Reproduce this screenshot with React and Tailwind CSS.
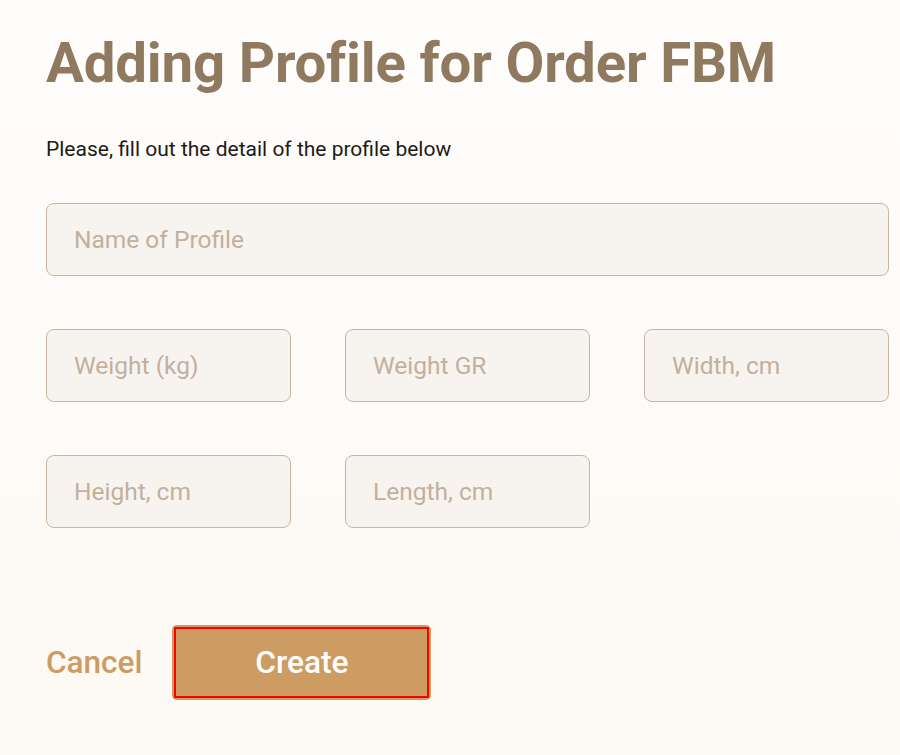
import React from "react";

function Field({ placeholder, className = "" }) {
  return (
    <input
      placeholder={placeholder}
      className={`h-[73px] rounded-[8px] border border-[#c6b6a3] bg-[#f7f4ef] px-[27px] text-[24.5px] text-[#8f7a60] placeholder:text-[#c2b09e] outline-none ${className}`}
      style={{ fontFamily: "Roboto, sans-serif" }}
    />
  );
}

export default function App() {
  return (
    <div
      className="min-h-[755px] w-[900px] overflow-hidden bg-gradient-to-b from-[#fefdfc] to-[#fdf9f4]"
      style={{ fontFamily: "Roboto, sans-serif" }}
    >
      <div className="ml-[46px] w-[843px] pt-[29px]">
        <h1 className="text-[56.4px] font-bold leading-[68px] text-[#8f7a60] tracking-[-0.2px]">
          Adding Profile for Order FBM
        </h1>
        <p className="mt-[40px] text-[21px] leading-[25px] text-[#1f1a14]">
          Please, fill out the detail of the profile below
        </p>
        <Field placeholder="Name of Profile" className="mt-[41px] w-full" />
        <div className="mt-[53px] grid grid-cols-[245px_245px_245px] gap-x-[54px] gap-y-[53px]">
          <Field placeholder="Weight (kg)" />
          <Field placeholder="Weight GR" />
          <Field placeholder="Width, cm" />
          <Field placeholder="Height, cm" />
          <Field placeholder="Length, cm" />
        </div>
        <div className="mt-[97px] flex items-center gap-[30px]">
          <button className="text-[31.5px] font-medium text-[#cc9c62]">Cancel</button>
          <button className="flex h-[75px] w-[259px] items-center justify-center rounded-[5px] bg-[#cc9c62] p-[2px]">
            <span className="flex h-full w-full items-center justify-center border-[2px] border-[#ff0000] text-[31.7px] font-medium text-white">
              Create
            </span>
          </button>
        </div>
      </div>
    </div>
  );
}
